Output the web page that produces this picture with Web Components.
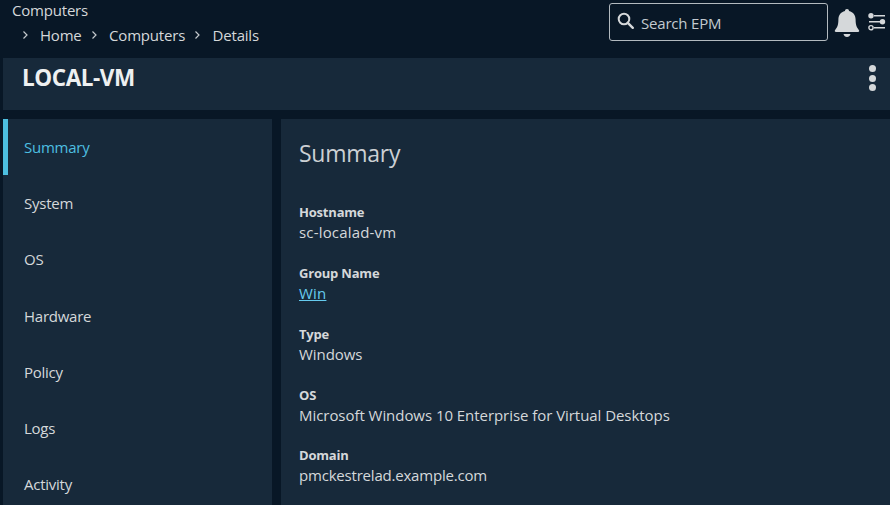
<!DOCTYPE html>
<html lang="en">
<head>
<meta charset="utf-8">
<title>LOCAL-VM</title>
<style>
  html, body { margin: 0; height: 505px; overflow: hidden; background: #081726; }
  body { font-family: "Open Sans", "Noto Sans", sans-serif; color: #d5d8da; display: flex; flex-direction: column; }
</style>
</head>
<body>
<template id="top-bar-tpl">
  <style>
    :host { display: flex; justify-content: space-between; height: 58px; flex: none; font-size: 15px; letter-spacing: -.2px; }
    .crumbs { padding: 1px 0 0 12px; }
    .page { line-height: 18px; }
    nav { display: flex; align-items: center; line-height: 20px; margin-top: 6px; padding-left: 9.5px; }
    nav svg { width: 7px; height: 10px; margin: 0 11.5px 0 0; flex: none; }
    nav span + svg { margin-left: 9px; }
    nav span { white-space: nowrap; }
    .tools { display: flex; align-items: flex-start; padding: 3px 4px 0 0; }
    .search { width: 210px; height: 36px; border: 1px solid #b3babf; border-radius: 3px; display: flex; align-items: center; gap: 6px; padding-left: 7px; color: #c2cad0; }
    .search svg { margin-bottom: 2px; }
    .search span { padding-top: 1px; }
    .bell { margin: 6px 0 0 6px; }
    .prefs { margin: 10px 0 0 8px; }
  </style>
  <div class="crumbs">
    <div class="page">Computers</div>
    <nav>
      <svg viewBox="0 0 7 10"><path d="M1.500 1.500 5 5 1.500 8.500" fill="none" stroke="#c4c9cd" stroke-width="1.200"/></svg><span>Home</span>
      <svg viewBox="0 0 7 10"><path d="M1.500 1.500 5 5 1.500 8.500" fill="none" stroke="#c4c9cd" stroke-width="1.200"/></svg><span>Computers</span>
      <svg viewBox="0 0 7 10"><path d="M1.500 1.500 5 5 1.500 8.500" fill="none" stroke="#c4c9cd" stroke-width="1.200"/></svg><span>Details</span>
    </nav>
  </div>
  <div class="tools">
    <div class="search">
      <svg width="18" height="18" viewBox="0 0 18 18"><circle cx="7" cy="7" r="5.300" fill="none" stroke="#d5d8da" stroke-width="2"/><path d="M10.800 10.800l5 5" stroke="#d5d8da" stroke-width="2.400" stroke-linecap="round"/></svg>
      <span>Search EPM</span>
    </div>
    <svg class="bell" width="26" height="28" viewBox="0 1 26 29" preserveAspectRatio="none"><path d="M13 1c1.300 0 2 .9 2 2.200 4.300 1 6.600 4.500 6.600 8.800 0 5.500 1 8 3.400 11 .5.800.1 1.800-1 1.800H2c-1.100 0-1.500-1-1-1.800 2.400-3 3.400-5.500 3.400-11 0-4.300 2.300-7.800 6.600-8.800C11 1.900 11.700 1 13 1z" fill="#d5d8da"/><path d="M9.500 27h7c-.4 1.900-1.800 3-3.500 3s-3.100-1.100-3.500-3z" fill="#d5d8da"/></svg>
    <svg class="prefs" width="18" height="19" viewBox="0 0 18 19" fill="none" stroke="#d5d8da"><path d="M6 2.700h11M1 8.700h11M6 14.700h11" stroke-width="1.600"/><circle cx="3" cy="2.700" r="2.700" fill="#d5d8da" stroke="none"/><circle cx="14.500" cy="8.700" r="2.700" fill="#d5d8da" stroke="none"/><circle cx="3" cy="14.700" r="2.100" stroke-width="1.400"/></svg>
  </div>
</template>

<template id="title-panel-tpl">
  <style>
    :host { display: flex; justify-content: space-between; flex: none; height: 52px; margin-left: 3px; background: #17293a; }
    h1 { margin: 6px 0 0 19px; font-size: 22.500px; line-height: 28px; font-weight: 700; color: #eef0f1; letter-spacing: -.43px; }
    .more { display: flex; flex-direction: column; gap: 2.400px; margin: 7px 14px 0 0; }
    .more i { width: 7.200px; height: 7.200px; border-radius: 50%; background: #d5d8da; }
  </style>
  <h1><slot></slot></h1>
  <div class="more"><i></i><i></i><i></i></div>
</template>

<template id="side-nav-tpl">
  <style>
    :host { display: block; width: 269px; flex: none; margin-left: 3px; background: #17293a; overflow: hidden; }
  </style>
  <slot></slot>
</template>

<template id="nav-item-tpl">
  <style>
    :host { display: flex; align-items: center; height: 56.200px; padding-left: 21px; box-sizing: border-box; font-size: 15px; letter-spacing: -.25px; color: #d5d8da; }
    :host([active]) { color: #4dbfe0; box-shadow: inset 5px 0 0 #4dbfe0; }
  </style>
  <slot></slot>
</template>

<template id="detail-field-tpl">
  <style>
    :host { display: block; margin-bottom: 21.850px; font-size: 15px; letter-spacing: -.05px; line-height: 20px; color: #d5d8da; }
    .label { font-size: 13px; font-weight: 700; line-height: 19px; letter-spacing: -.2px; }
    ::slotted(a) { color: #66cbee; text-decoration: underline; letter-spacing: .2px; }
  </style>
  <div class="label"></div>
  <slot></slot>
</template>

<template id="summary-panel-tpl">
  <style>
    :host { display: block; flex: 1; margin-left: 9px; background: #17293a; padding: 18px 18px 0; overflow: hidden; }
    h2 { margin: 0 0 33px; font-size: 23px; line-height: 33px; font-weight: 400; letter-spacing: -.25px; color: #ccd0d4; }
  </style>
  <h2>Summary</h2>
  <slot></slot>
</template>

<top-bar></top-bar>
<title-panel>LOCAL-VM</title-panel>
<div style="display:flex;flex:1;margin-top:9px;min-height:0">
  <side-nav>
    <nav-item active>Summary</nav-item>
    <nav-item>System</nav-item>
    <nav-item>OS</nav-item>
    <nav-item>Hardware</nav-item>
    <nav-item>Policy</nav-item>
    <nav-item>Logs</nav-item>
    <nav-item>Activity</nav-item>
  </side-nav>
  <summary-panel>
    <detail-field label="Hostname" style="letter-spacing:.17px">sc-localad-vm</detail-field>
    <detail-field label="Group Name"><a href="#">Win</a></detail-field>
    <detail-field label="Type">Windows</detail-field>
    <detail-field label="OS">Microsoft Windows 10 Enterprise for Virtual Desktops</detail-field>
    <detail-field label="Domain" style="letter-spacing:-.2px">pmckestrelad.example.com</detail-field>
  </summary-panel>
</div>

<script>
  function define(name, tplId, init) {
    customElements.define(name, class extends HTMLElement {
      constructor() {
        super();
        this.attachShadow({ mode: 'open' });
        this.shadowRoot.appendChild(document.getElementById(tplId).content.cloneNode(true));
      }
      connectedCallback() { if (init) init(this); }
    });
  }
  define('top-bar', 'top-bar-tpl');
  define('title-panel', 'title-panel-tpl');
  define('side-nav', 'side-nav-tpl');
  define('nav-item', 'nav-item-tpl');
  define('summary-panel', 'summary-panel-tpl');
  define('detail-field', 'detail-field-tpl', el => {
    el.shadowRoot.querySelector('.label').textContent = el.getAttribute('label');
  });
</script>
</body>
</html>
